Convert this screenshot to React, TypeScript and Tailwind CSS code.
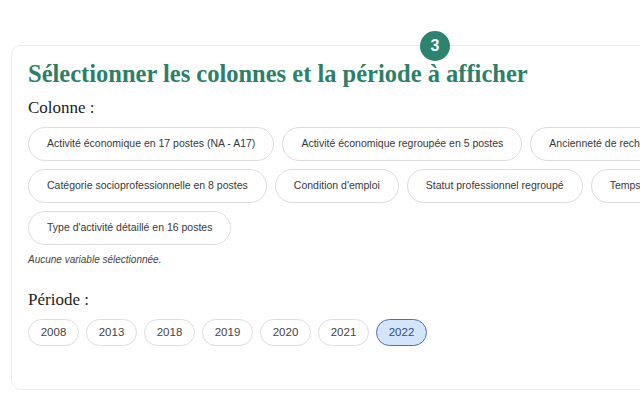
import { useState } from 'react'

const colonnes = [
  'Activité économique en 17 postes (NA - A17)',
  'Activité économique regroupée en 5 postes',
  "Ancienneté de recherche d'emploi",
  'Catégorie socioprofessionnelle en 8 postes',
  "Condition d'emploi",
  'Statut professionnel regroupé',
  'Temps de travail',
  "Type d'activité détaillé en 16 postes",
]

const annees = ['2008', '2013', '2018', '2019', '2020', '2021', '2022']

export default function App() {
  const [periode, setPeriode] = useState('2022')

  return (
    <div className="w-[640px] h-[400px] overflow-hidden bg-white font-['Liberation_Sans',Arial,sans-serif]">
      <div className="pt-[45px] pl-[11px]">
        <div className="relative w-[848px] h-[345px] rounded-[10px] border border-[#ececec] px-[16px] pt-[13px]">
          <div className="absolute left-1/2 top-0 -translate-x-1/2 -translate-y-1/2 w-[30px] h-[30px] rounded-full bg-[#2c8470] text-white flex items-center justify-center text-[16px] font-bold">
            3
          </div>

          <h2 className="font-['Liberation_Serif',serif] font-bold text-[24.5px] leading-[30px] text-[#2a8068]">
            Sélectionner les colonnes et la période à afficher
          </h2>

          <p className="mt-[8px] font-['Liberation_Serif',serif] text-[17px] leading-[22px] text-[#222]">
            Colonne :
          </p>

          <div className="mt-[8px] flex flex-wrap gap-[8px] w-[814px]">
            {colonnes.map(c => (
              <button
                key={c}
                className="h-[34px] px-[18px] rounded-full border border-[#dcdcdc] bg-white text-[10.5px] text-[#383838] whitespace-nowrap"
              >
                {c}
              </button>
            ))}
          </div>

          <p className="mt-[7px] text-[10px] italic text-[#444]">Aucune variable sélectionnée.</p>

          <p className="mt-[22px] font-['Liberation_Serif',serif] text-[17px] leading-[22px] text-[#222]">
            Période :
          </p>

          <div className="mt-[8px] flex gap-[7px]">
            {annees.map(a => (
              <button
                key={a}
                onClick={() => setPeriode(a)}
                className={
                  a === periode
                    ? 'w-[51px] h-[27px] rounded-full border border-[#4a70aa] bg-[#d3e5fb] text-[11.5px] text-[#2f4f7a]'
                    : 'w-[51px] h-[27px] rounded-full border border-[#dcdcdc] bg-white text-[11.5px] text-[#444]'
                }
              >
                {a}
              </button>
            ))}
          </div>
        </div>
      </div>
    </div>
  )
}
